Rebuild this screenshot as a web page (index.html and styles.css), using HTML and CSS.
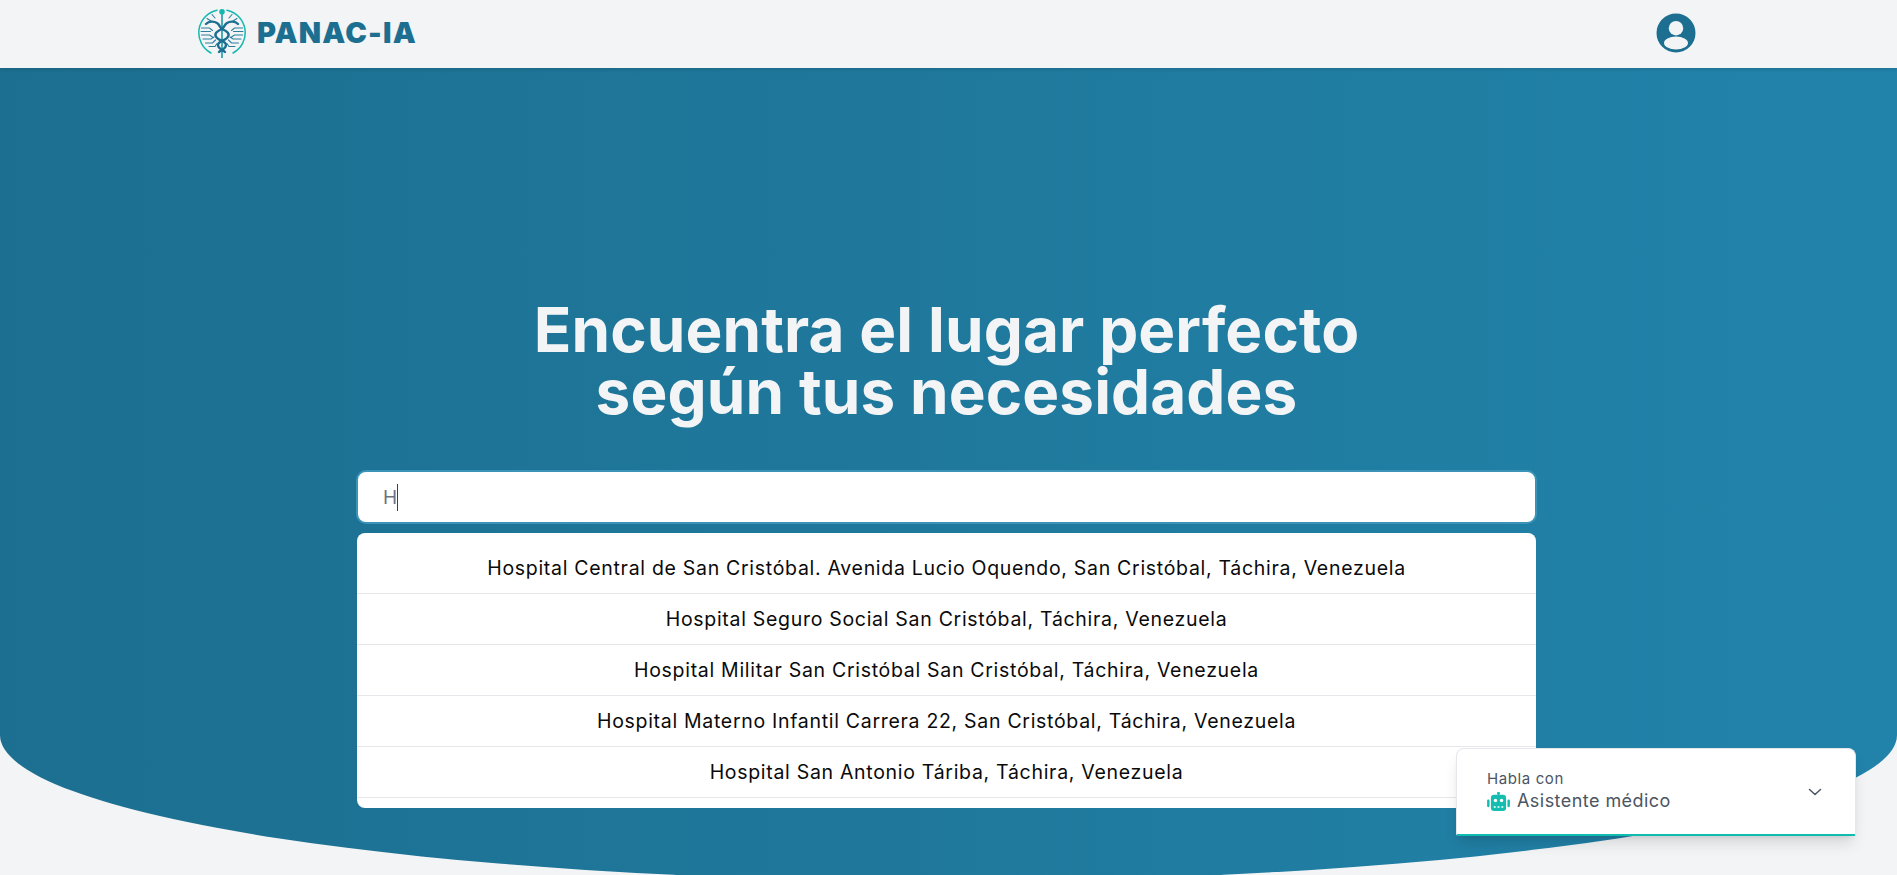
FILE: index.html
```html
<!DOCTYPE html>
<html lang="es">
<head>
<meta charset="utf-8">
<title>PANAC-IA</title>
<link rel="stylesheet" href="styles.css">
</head>
<body>
<header class="topbar">
  <div class="topbar-inner">
    <a class="brand" href="#">
      <svg class="brand-logo" viewBox="0 0 48 50" aria-hidden="true">
        <g fill="none" stroke="#14b8ae" stroke-width="1.5" stroke-linecap="round">
          <path d="M19 2.200A23 23 0 0 0 13 45"/>
          <path d="M29 2.200A23 23 0 0 1 35 45"/>
        </g>
        <path d="M24 5v45" fill="none" stroke="#1c9aa6" stroke-width="1.600" stroke-linecap="round"/>
        <circle cx="24" cy="3.800" r="2.800" fill="#14b8ae"/>
        <g fill="none" stroke="#2a7f9e" stroke-width="1.100" stroke-linecap="round">
          <path d="M3.500 20h8l3 2.500M3 23.500h9.500M3.500 27h8l3 2M5 31h8l3-2M7.500 35h7l3-3M11 38.500h6l2-3M9 10.500l4 2.500M14 6.500l3 3.500"/>
          <path d="M44.500 20h-8l-3 2.500M45 23.500h-9.500M44.500 27h-8l-3 2M43 31h-8l-3-2M40.500 35h-7l-3-3M37 38.500h-6l-2-3M39 10.500l-4 2.500M34 6.500l-3 3.500"/>
        </g>
        <g fill="none" stroke="#1c6f90" stroke-width="2.400" stroke-linecap="round">
          <path d="M8 16c3-3 8-3 11-1 3 2 3 5 5 6 5 2 9 5 5 9-3 3-9 3-9 7s5 5 7 7"/>
          <path d="M40 16c-3-3-8-3-11-1-3 2-3 5-5 6-5 2-9 5-5 9 3 3 9 3 9 7s-5 5-7 7"/>
        </g>
      </svg>
      <span class="brand-name">PANAC-IA</span>
    </a>
    <svg class="user-icon" viewBox="0 0 40 40" aria-hidden="true">
      <circle cx="20" cy="20" r="19.500" fill="#1c6f90"/>
      <circle cx="20" cy="15.200" r="7.200" fill="#f3f4f6"/>
      <ellipse cx="20" cy="30" rx="12" ry="6.400" fill="#f3f4f6"/>
    </svg>
  </div>
</header>
<main class="hero">
  <h1 class="hero-title">Encuentra el lugar perfecto<br>según tus necesidades</h1>
  <div class="search">H<span class="caret"></span></div>
  <ul class="results">
    <li class="result">Hospital Central de San Cristóbal. Avenida Lucio Oquendo, San Cristóbal, Táchira, Venezuela</li>
    <li class="result">Hospital Seguro Social San Cristóbal, Táchira, Venezuela</li>
    <li class="result">Hospital Militar San Cristóbal San Cristóbal, Táchira, Venezuela</li>
    <li class="result">Hospital Materno Infantil Carrera 22, San Cristóbal, Táchira, Venezuela</li>
    <li class="result">Hospital San Antonio Táriba, Táchira, Venezuela</li>
  </ul>
</main>
<aside class="chat">
  <div class="chat-text">
    <div class="chat-label">Habla con</div>
    <div class="chat-name">
      <svg class="chat-robot" viewBox="0 0 24 20" aria-hidden="true">
        <rect x="11" y="0" width="2" height="3" fill="#14bdb0"/>
        <circle cx="12" cy="1.400" r="1.400" fill="#14bdb0"/>
        <rect x="4" y="3" width="16" height="17" rx="3.500" fill="#14bdb0"/>
        <rect x="0" y="8" width="2.600" height="8" rx="1.200" fill="#14bdb0"/>
        <rect x="21.400" y="8" width="2.600" height="8" rx="1.200" fill="#14bdb0"/>
        <circle cx="8.800" cy="9" r="1.800" fill="#fff"/>
        <circle cx="15.200" cy="9" r="1.800" fill="#fff"/>
        <rect x="7" y="15" width="2" height="1.600" fill="#fff"/>
        <rect x="11" y="15" width="2" height="1.600" fill="#fff"/>
        <rect x="15" y="15" width="2" height="1.600" fill="#fff"/>
      </svg>
      <span>Asistente médico</span>
    </div>
  </div>
  <svg class="chat-chevron" viewBox="0 0 14 8" aria-hidden="true">
    <path d="M1.500 1.500L7 6.500l5.500-5" fill="none" stroke="#4b5563" stroke-width="1.500" stroke-linecap="round" stroke-linejoin="round"/>
  </svg>
</aside>
</body>
</html>
```
FILE: styles.css
```css
* { box-sizing: border-box; }
html, body { margin: 0; height: 875px; overflow: hidden; }
body {
  background: #f3f4f6;
  font-family: Inter, "Noto Sans", "Liberation Sans", sans-serif;
  position: relative;
}
.topbar {
  height: 68px;
  background: #f3f4f6;
  position: relative;
  z-index: 1;
  box-shadow: 0 1px 4px rgba(0,0,0,.15);
}
.topbar-inner {
  height: 100%;
  padding: 0 201px 3px 198px;
  display: flex;
  align-items: center;
  justify-content: space-between;
}
.brand {
  display: flex;
  align-items: center;
  gap: 11px;
  text-decoration: none;
}
.brand-logo { width: 48px; height: 50px; display: block; }
.brand-name {
  font-size: 29px;
  font-weight: 900;
  color: #1c6f90;
  letter-spacing: 1.2px;
}
.user-icon { width: 40px; height: 40px; display: block; }
.hero {
  height: 813px;
  padding: 231px 4px 0 0;
  background: linear-gradient(90deg, #1c6f90, #2283aa);
  border-radius: 0 0 50% 50% / 0 0 146px 146px;
  display: flex;
  flex-direction: column;
  align-items: center;
}
.hero-title {
  margin: 0 0 47px;
  font-size: 62px;
  line-height: 62px;
  font-weight: 700;
  color: #f3f4f6;
  text-align: center;
  letter-spacing: 0.1px;
}
.search {
  width: 1181px;
  height: 54px;
  padding-left: 25px;
  background: #fff;
  border: 2px solid #3b93b8;
  border-radius: 10px;
  display: flex;
  align-items: center;
  font-size: 19px;
  color: #6b7280;
}
.caret {
  width: 1px;
  height: 27px;
  margin-left: 0;
  background: #374151;
}
.results {
  list-style: none;
  width: 1179px;
  margin: 9px 0 0;
  padding: 10px 0;
  background: #fff;
  border-radius: 8px;
}
.result {
  height: 51px;
  border-bottom: 1px solid #e5e7eb;
  display: flex;
  align-items: center;
  justify-content: center;
  font-size: 19.5px;
  letter-spacing: 0.7px;
  color: #0a0a0a;
}
.chat {
  position: absolute;
  left: 1456px;
  top: 748px;
  width: 400px;
  height: 88px;
  padding: 20px 33px 0 30px;
  background: #fff;
  border-radius: 8px 8px 2px 2px;
  border: 1px solid #e5e7eb;
  border-bottom: 2px solid #0fbcb0;
  box-shadow: 0 10px 15px -3px rgba(0,0,0,.12), 0 4px 6px -4px rgba(0,0,0,.12);
  display: flex;
  justify-content: space-between;
  align-items: flex-start;
}
.chat-label { font-size: 15px; line-height: 20px; letter-spacing: 0.6px; color: #4b5563; }
.chat-name {
  display: flex;
  align-items: center;
  gap: 7px;
  font-size: 18px;
  line-height: 24px;
  letter-spacing: 0.45px;
  color: #4b5563;
}
.chat-robot { width: 23px; height: 19px; display: block; }
.chat-chevron { width: 14px; height: 8px; margin-top: 19px; display: block; }
```
